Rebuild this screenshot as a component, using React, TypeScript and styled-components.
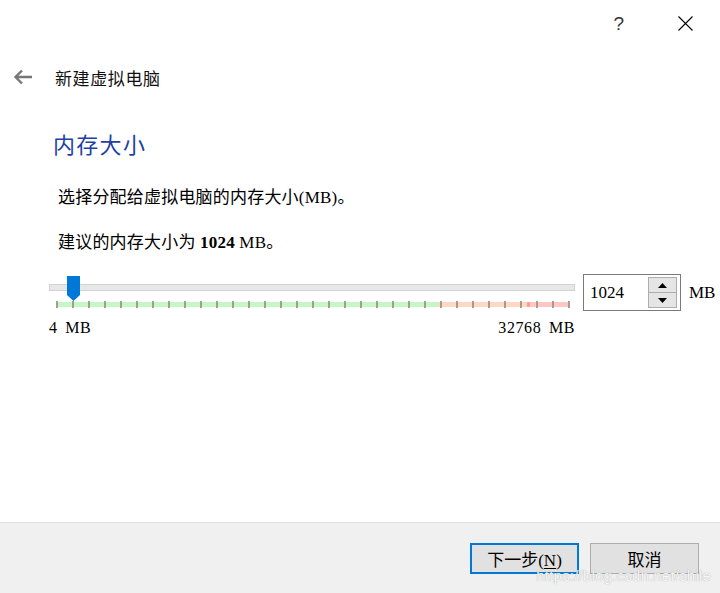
import React from 'react';
import styled, { createGlobalStyle } from 'styled-components';

const GlobalStyle = createGlobalStyle`
  html, body {
    margin: 0;
    padding: 0;
    background: #ffffff;
  }
  body {
    font-family: "Liberation Serif", "Noto Sans CJK SC", serif;
    color: #000;
  }
`;

const TICKS = 33;
const STEP_MB = 1024;
const VALUE_MB = 1024;

const Window = styled.div`
  width: 720px;
  height: 593px;
  display: flex;
  flex-direction: column;
  background: #ffffff;
  position: relative;
  overflow: hidden;
`;

const TitleBar = styled.div`
  height: 46px;
  display: flex;
  justify-content: flex-end;
  align-items: center;
  padding-right: 27px;
  gap: 54px;
`;

const HelpMark = styled.span`
  font-family: "Liberation Sans", "Noto Sans", sans-serif;
  font-size: 19px;
  color: #333;
  line-height: 1;
`;

const Header = styled.div`
  height: 62px;
  display: flex;
  align-items: center;
  padding-left: 13px;
  gap: 22px;
`;

const HeaderTitle = styled.span`
  font-family: "Noto Sans CJK SC", sans-serif;
  font-size: 17px;
  color: #111;
  letter-spacing: 0.6px;
`;

const Content = styled.div`
  padding-left: 49px;
  display: flex;
  flex-direction: column;
`;

const PageTitle = styled.div`
  margin: 20px 0 0 4px;
  font-family: "Noto Sans CJK SC", sans-serif;
  font-size: 22px;
  line-height: 30px;
  color: #1f3fa5;
  letter-spacing: 1.3px;
`;

const Paragraph = styled.div<{ $top: number }>`
  margin: ${(p) => p.$top}px 0 0 9px;
  font-size: 17px;
  line-height: 24px;
  letter-spacing: 0.2px;

  b {
    font-family: "Liberation Serif", serif;
    font-weight: 700;
  }
`;

const SliderRow = styled.div`
  margin-top: 19px;
  display: flex;
  align-items: flex-start;
`;

const SliderBlock = styled.div`
  position: relative;
  flex: 0 0 526px;
  padding-top: 10px;
`;

const Track = styled.div`
  height: 5px;
  background: #e6e7e7;
  border: 1px solid #d3d3d3;
`;

const TickBar = styled.div`
  position: relative;
  margin: 10px 0 0 7px;
  width: 513px;
  height: 7px;
`;

const Zone = styled.div<{ $color: string; $from: number; $to: number }>`
  position: absolute;
  top: 1px;
  height: 5px;
  left: ${(p) => p.$from}px;
  width: ${(p) => p.$to - p.$from}px;
  background: ${(p) => p.$color};
`;

const Tick = styled.div`
  position: absolute;
  top: 0;
  width: 2px;
  height: 7px;
  background: #a39d93;
`;

const Handle = styled.svg`
  position: absolute;
  top: 2px;
`;

const RangeLabels = styled.div`
  margin-top: 10px;
  display: flex;
  justify-content: space-between;
  font-size: 16px;
  line-height: 20px;
  letter-spacing: 0.6px;
  word-spacing: 3px;
`;

const SpinBox = styled.div`
  flex: 0 0 98px;
  margin-left: 8px;
  height: 37px;
  box-sizing: border-box;
  border: 1px solid #7a7a7a;
  display: flex;
  align-items: center;
  justify-content: space-between;
  padding: 0 3px 0 6px;
`;

const SpinValue = styled.span`
  font-size: 17px;
`;

const SpinButtons = styled.div`
  display: flex;
  flex-direction: column;
  width: 29px;
`;

const SpinButton = styled.div`
  height: 14px;
  background: #e5e5e5;
  border: 1px solid #adadad;
  display: flex;
  align-items: center;
  justify-content: center;

  & + & {
    border-top: none;
  }
`;

const Unit = styled.span`
  margin-left: 8px;
  font-size: 17px;
  line-height: 37px;
`;

const Spacer = styled.div`
  flex: 1;
`;

const Footer = styled.div`
  height: 70px;
  background: #f0f0f0;
  border-top: 1px solid #dfdfdf;
  display: flex;
  align-items: center;
  justify-content: flex-end;
  padding-right: 21px;
  gap: 11px;
`;

const Button = styled.button<{ $primary?: boolean }>`
  width: 109px;
  height: 31px;
  box-sizing: border-box;
  background: #e1e1e1;
  border: ${(p) => (p.$primary ? '2px solid #0078d7' : '1px solid #adadad')};
  font-family: "Liberation Serif", "Noto Sans CJK SC", serif;
  font-size: 17px;
  color: #000;
  padding: 0;

  u {
    text-underline-offset: 2px;
  }
`;

const Watermark = styled.div`
  position: absolute;
  right: 9px;
  bottom: 9px;
  font-family: "Liberation Sans", sans-serif;
  font-size: 15px;
  color: rgba(255, 255, 255, 0.92);
  text-shadow: 0 0 1px rgba(110, 110, 110, 0.7);
  letter-spacing: 0.2px;
`;

export default function App() {
  // tick i sits at 7 + 16 * i inside the slider block (2px wide)
  const handleX = 7 + 16 * (VALUE_MB / STEP_MB) + 1 - 6.5;
  return (
    <>
      <GlobalStyle />
      <Window>
        <TitleBar>
          <HelpMark>?</HelpMark>
          <svg width="15" height="15" viewBox="0 0 15 15">
            <path d="M0.5 0.5 L14.5 14.5 M14.5 0.5 L0.5 14.5" stroke="#000" strokeWidth="1.1" fill="none" />
          </svg>
        </TitleBar>

        <Header>
          <svg width="20" height="16" viewBox="0 0 20 16">
            <path d="M19 8 H2.5 M9 1.5 L2.5 8 L9 14.5" stroke="#777" strokeWidth="2.4" fill="none" />
          </svg>
          <HeaderTitle>新建虚拟电脑</HeaderTitle>
        </Header>

        <Content>
          <PageTitle>内存大小</PageTitle>
          <Paragraph $top={28}>选择分配给虚拟电脑的内存大小(MB)。</Paragraph>
          <Paragraph $top={21}>
            建议的内存大小为 <b>1024</b> MB。
          </Paragraph>

          <SliderRow>
            <SliderBlock>
              <Track />
              <TickBar>
                <Zone $color="#c5f7c5" $from={0} $to={382} />
                <Zone $color="#ffd7c2" $from={382} $to={473} />
                <Zone $color="#ffc6c6" $from={473} $to={513} />
                <Zone $color="#ff9f90" $from={471} $to={474} />
                {Array.from({ length: TICKS }, (_, i) => (
                  <Tick key={i} style={{ left: i * 16 }} />
                ))}
              </TickBar>
              <Handle width="13" height="25" viewBox="0 0 13 25" style={{ left: handleX }}>
                <polygon points="0,0 13,0 13,19 6.5,25 0,19" fill="#0078d7" />
              </Handle>
              <RangeLabels>
                <span>4 MB</span>
                <span>32768 MB</span>
              </RangeLabels>
            </SliderBlock>

            <SpinBox>
              <SpinValue>1024</SpinValue>
              <SpinButtons>
                <SpinButton>
                  <svg width="9" height="5" viewBox="0 0 9 5">
                    <polygon points="0,5 9,5 4.5,0" fill="#000" />
                  </svg>
                </SpinButton>
                <SpinButton>
                  <svg width="9" height="5" viewBox="0 0 9 5">
                    <polygon points="0,0 9,0 4.5,5" fill="#000" />
                  </svg>
                </SpinButton>
              </SpinButtons>
            </SpinBox>
            <Unit>MB</Unit>
          </SliderRow>
        </Content>

        <Spacer />

        <Footer>
          <Button $primary>
            下一步(<u>N</u>)
          </Button>
          <Button>取消</Button>
        </Footer>
        <Watermark>https://blog.csdn.net/shile</Watermark>
      </Window>
    </>
  );
}
